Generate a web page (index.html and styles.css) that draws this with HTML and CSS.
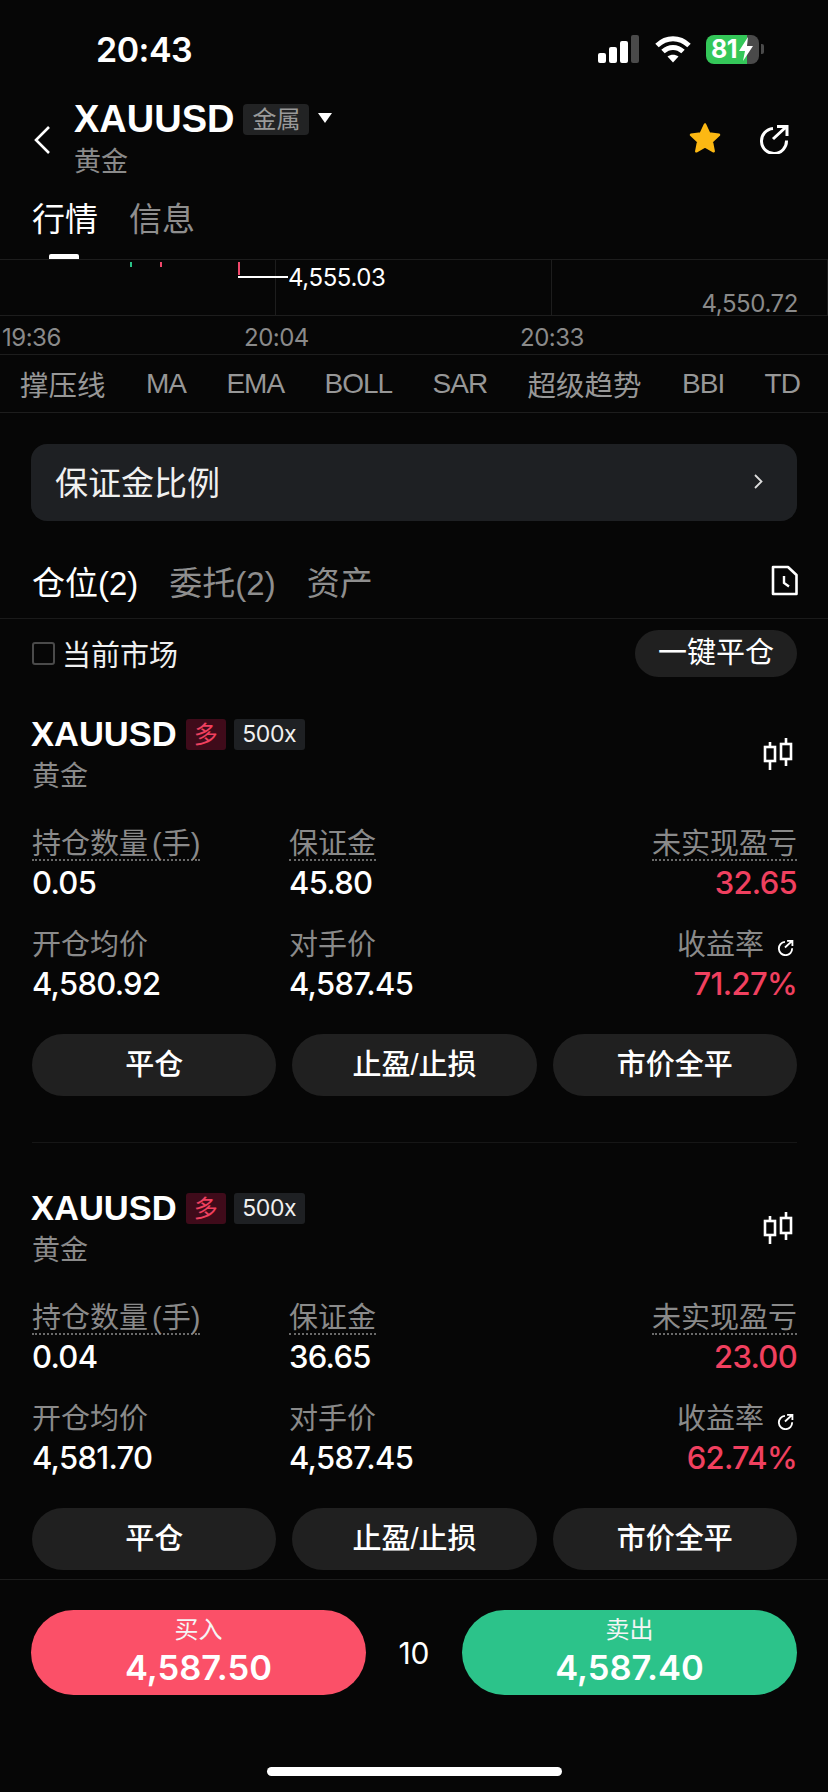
FILE: index.html
```html
<!DOCTYPE html>
<html lang="zh-CN">
<head>
  <meta charset="UTF-8">
  <title>XAUUSD</title>
  <link rel="stylesheet" href="styles.css">
</head>
<body>
  <div class="phone">
    <div class="status">
      <span class="clock">20:43</span>
      <div class="status-icons">
        <svg class="signal" width="41" height="28" viewBox="0 0 41 28">
          <rect x="0" y="18" width="8" height="10" rx="2" fill="#fff"/>
          <rect x="11" y="12" width="8" height="16" rx="2" fill="#fff"/>
          <rect x="22" y="6" width="8" height="22" rx="2" fill="#fff"/>
          <rect x="33" y="0" width="8" height="28" rx="2" fill="#4a4a4a"/>
        </svg>
        <svg class="wifi" width="38" height="28" viewBox="0 0 38 28">
          <path d="M3 10.500C12.500 1.500 25.500 1.500 35 10.500M9 16.500C15 11 23 11 29 16.500" fill="none" stroke="#fff" stroke-width="5"/>
          <path d="M13.500 21.500C17 19 21 19 24.500 21.500L19 27.500Z" fill="#fff"/>
        </svg>
        <div class="battery">
          <div class="battery-body">
            <span class="battery-num">81</span>
            <svg class="bolt" width="16" height="24" viewBox="0 0 16 24"><path d="M10 0L1 14H7L5 24L15 9H9Z" fill="#fff"/></svg>
          </div>
          <div class="battery-cap"></div>
        </div>
      </div>
    </div>

    <div class="head">
      <svg class="back" width="18" height="30" viewBox="0 0 18 30"><path d="M16 2L3 15L16 28" fill="none" stroke="#fff" stroke-width="2.600"/></svg>
      <div class="head-title">
        <div class="title-row">
          <span class="symbol">XAUUSD</span>
          <span class="market-tag">金属</span>
          <svg class="caret" width="14" height="10" viewBox="0 0 14 10"><path d="M0 0H14L7 10Z" fill="#fff"/></svg>
        </div>
        <div class="subname">黄金</div>
      </div>
      <div class="head-actions">
        <svg width="34" height="33" viewBox="0 0 34 33"><path d="M17 2.500L21.200 11.500L31 12.800L23.800 19.500L25.700 29.300L17 24.500L8.300 29.300L10.200 19.500L3 12.800L12.800 11.500Z" fill="#fcb813" stroke="#fcb813" stroke-width="2.500" stroke-linejoin="round"/></svg>
        <svg class="share" width="32" height="30" viewBox="0 0 32 30"><path d="M15 4.500A12.500 12.500 0 1 0 28.500 16.500" fill="none" stroke="#fff" stroke-width="3"/><path d="M15 15L28 3M19 2.500H29V12" fill="none" stroke="#fff" stroke-width="3"/></svg>
      </div>
    </div>

    <div class="tabs">
      <span class="tab on">行情<i class="tab-mark"></i></span>
      <span class="tab">信息</span>
    </div>

    <div class="chart">
      <div class="plot">
        <div class="grid-cell"></div>
        <div class="grid-cell"></div>
        <div class="grid-cell"></div>
        <i class="candle green candle-a"></i>
        <i class="candle red candle-b"></i>
        <i class="candle red candle-c"></i>
        <div class="low-mark"><i></i><span>4,555.03</span></div>
        <span class="axis-price">4,550.72</span>
      </div>
      <div class="times">
        <span class="time time-a">19:36</span>
        <span class="time time-b">20:04</span>
        <span class="time time-c">20:33</span>
      </div>
    </div>

    <div class="indicators">
      <span>撑压线</span><span class="en">MA</span><span class="en">EMA</span><span class="en">BOLL</span><span class="en">SAR</span><span>超级趋势</span><span class="en">BBI</span><span class="en">TD</span>
    </div>

    <div class="ratio">
      <span>保证金比例</span>
      <svg width="9" height="15" viewBox="0 0 9 15"><path d="M1 1L7.500 7.500L1 14" fill="none" stroke="#ddd" stroke-width="1.800"/></svg>
    </div>

    <div class="pos-tabs">
      <span class="pos-tab on">仓位(2)</span>
      <span class="pos-tab">委托(2)</span>
      <span class="pos-tab">资产</span>
      <svg class="doc" width="27" height="31" viewBox="0 0 27 31"><path d="M2 2H17L25.500 10V29H2Z" fill="none" stroke="#fff" stroke-width="2.600" stroke-linejoin="round"/><path d="M13 11V18L18 21.500" fill="none" stroke="#fff" stroke-width="2.400"/></svg>
    </div>

    <div class="filter">
      <i class="check"></i>
      <span class="filter-label">当前市场</span>
      <span class="close-all">一键平仓</span>
    </div>

    <div class="position">
      <div class="pos-head">
        <div>
          <div class="pos-title">
            <span class="pos-symbol">XAUUSD</span>
            <span class="side">多</span>
            <span class="lever">500x</span>
          </div>
          <div class="pos-name">黄金</div>
        </div>
        <svg class="candles" width="30" height="32" viewBox="0 0 30 32"><path d="M7 4V9M7 23V32M23 0V6M23 21V28" stroke="#fff" stroke-width="2.600"/><rect x="2" y="9" width="10" height="14" fill="none" stroke="#fff" stroke-width="2.600"/><rect x="18" y="6" width="10" height="15" fill="none" stroke="#fff" stroke-width="2.600"/></svg>
      </div>
      <div class="metrics">
        <div class="metric"><span class="label dotted">持仓数量 (手)</span><span class="value">0.05</span></div>
        <div class="metric"><span class="label dotted">保证金</span><span class="value">45.80</span></div>
        <div class="metric right"><span class="label dotted">未实现盈亏</span><span class="value up">32.65</span></div>
        <div class="metric"><span class="label">开仓均价</span><span class="value">4,580.92</span></div>
        <div class="metric"><span class="label">对手价</span><span class="value">4,587.45</span></div>
        <div class="metric right">
          <span class="label">收益率
            <svg class="mini-share" width="17" height="17" viewBox="0 0 32 30"><path d="M15 4.500A12.500 12.500 0 1 0 28.500 16.500" fill="none" stroke="#fff" stroke-width="3.500"/><path d="M15 15L28 3M19 2.500H29V12" fill="none" stroke="#fff" stroke-width="3.500"/></svg>
          </span>
          <span class="value up">71.27%</span>
        </div>
      </div>
      <div class="actions">
        <span class="action">平仓</span>
        <span class="action">止盈/止损</span>
        <span class="action">市价全平</span>
      </div>
    </div>

    <div class="position last">
      <div class="pos-head">
        <div>
          <div class="pos-title">
            <span class="pos-symbol">XAUUSD</span>
            <span class="side">多</span>
            <span class="lever">500x</span>
          </div>
          <div class="pos-name">黄金</div>
        </div>
        <svg class="candles" width="30" height="32" viewBox="0 0 30 32"><path d="M7 4V9M7 23V32M23 0V6M23 21V28" stroke="#fff" stroke-width="2.600"/><rect x="2" y="9" width="10" height="14" fill="none" stroke="#fff" stroke-width="2.600"/><rect x="18" y="6" width="10" height="15" fill="none" stroke="#fff" stroke-width="2.600"/></svg>
      </div>
      <div class="metrics">
        <div class="metric"><span class="label dotted">持仓数量 (手)</span><span class="value">0.04</span></div>
        <div class="metric"><span class="label dotted">保证金</span><span class="value">36.65</span></div>
        <div class="metric right"><span class="label dotted">未实现盈亏</span><span class="value up">23.00</span></div>
        <div class="metric"><span class="label">开仓均价</span><span class="value">4,581.70</span></div>
        <div class="metric"><span class="label">对手价</span><span class="value">4,587.45</span></div>
        <div class="metric right">
          <span class="label">收益率
            <svg class="mini-share" width="17" height="17" viewBox="0 0 32 30"><path d="M15 4.500A12.500 12.500 0 1 0 28.500 16.500" fill="none" stroke="#fff" stroke-width="3.500"/><path d="M15 15L28 3M19 2.500H29V12" fill="none" stroke="#fff" stroke-width="3.500"/></svg>
          </span>
          <span class="value up">62.74%</span>
        </div>
      </div>
      <div class="actions">
        <span class="action">平仓</span>
        <span class="action">止盈/止损</span>
        <span class="action">市价全平</span>
      </div>
    </div>

    <div class="trade">
      <div class="trade-btn buy"><span class="trade-label">买入</span><span class="trade-price">4,587.50</span></div>
      <span class="lots">10</span>
      <div class="trade-btn sell"><span class="trade-label">卖出</span><span class="trade-price">4,587.40</span></div>
    </div>
    <div class="home-bar"></div>
  </div>
</body>
</html>
```

FILE: styles.css
```css
* {
  box-sizing: border-box;
}

body {
  margin: 0;
  background: #060606;
  color: #fff;
  font-family: "Liberation Sans", "Noto Sans CJK SC", sans-serif;
}

.phone {
  width: 828px;
  height: 1792px;
  overflow: hidden;
}

/* status bar */
.status {
  height: 98px;
  display: flex;
  align-items: center;
  justify-content: space-between;
  padding: 0 64px 0 96px;
}

.clock {
  font-family: "Inter", sans-serif;
  font-size: 34px;
  font-weight: 600;
  letter-spacing: -0.5px;
}

.status-icons {
  display: flex;
  align-items: center;
}

.signal {
  margin-right: 15px;
}

.wifi {
  margin-right: 14px;
}

.battery {
  display: flex;
  align-items: center;
  gap: 2px;
}

.battery-body {
  width: 53px;
  height: 29px;
  border-radius: 8px;
  background: linear-gradient(90deg, #34c759 0 78%, #4a4a4a 78%);
  display: flex;
  align-items: center;
  padding-left: 5px;
}

.battery-num {
  font-family: "Inter", sans-serif;
  font-size: 25px;
  font-weight: 700;
  letter-spacing: -0.5px;
}

.bolt {
  margin-left: 1px;
}

.battery-cap {
  width: 3px;
  height: 10px;
  border-radius: 0 2px 2px 0;
  background: #4a4a4a;
}

/* header */
.head {
  height: 84px;
  display: flex;
  align-items: center;
  padding: 0 38px 0 33px;
}

.back {
  margin-right: 23px;
}

.head-title {
  flex: 1;
}

.title-row {
  height: 42px;
  display: flex;
  align-items: center;
}

.symbol {
  font-size: 38px;
  font-weight: 700;
}

.market-tag {
  margin-left: 9px;
  width: 66px;
  height: 31px;
  border-radius: 4px;
  background: #222324;
  color: #9a9a9a;
  font-size: 24px;
  line-height: 31px;
  text-align: center;
}

.caret {
  margin-left: 9px;
  margin-top: -3px;
}

.subname {
  height: 42px;
  line-height: 44px;
  color: #8a8a8a;
  font-size: 27px;
}

.head-actions {
  display: flex;
  align-items: center;
  gap: 36px;
  margin-top: -3px;
}

/* page tabs */
.tabs {
  height: 77px;
  padding: 18px 32px 0;
  display: flex;
  gap: 31px;
}

.tab {
  position: relative;
  height: 40px;
  line-height: 40px;
  font-size: 33px;
  color: #8e8e8e;
}

.tab.on {
  color: #fff;
}

.tab-mark {
  position: absolute;
  left: 17px;
  top: 54px;
  width: 30px;
  height: 5px;
  border-radius: 2px 2px 0 0;
  background: #fff;
}

/* chart strip */
.chart {
  height: 95px;
  border-top: 1px solid #1d1d1d;
}

.plot {
  position: relative;
  height: 56px;
  display: flex;
  border-bottom: 1px solid #1d1d1d;
}

.grid-cell {
  width: 276px;
  border-right: 1px solid #1d1d1d;
}

.grid-cell:last-of-type {
  border-right: none;
}

.candle {
  position: absolute;
  top: 2px;
  width: 2px;
}

.green {
  background: #2bc287;
}

.red {
  background: #f0476a;
}

.candle-a {
  left: 130px;
  height: 5px;
}

.candle-b {
  left: 160px;
  height: 5px;
}

.candle-c {
  left: 238px;
  height: 13px;
}

.low-mark {
  position: absolute;
  left: 238px;
  top: 2px;
  height: 30px;
  display: flex;
  align-items: center;
  font-family: "Inter", sans-serif;
  font-size: 24px;
  letter-spacing: -0.4px;
}

.low-mark i {
  width: 50px;
  height: 2px;
  background: #fff;
}

.axis-price {
  position: absolute;
  right: 30px;
  bottom: -3px;
  font-family: "Inter", sans-serif;
  font-size: 24px;
  letter-spacing: -0.4px;
  color: #8a8a8a;
}

.times {
  position: relative;
  height: 38px;
}

.time {
  position: absolute;
  top: 7px;
  font-family: "Inter", sans-serif;
  font-size: 24px;
  letter-spacing: -0.5px;
  color: #8a8a8a;
}

.time-a {
  left: 2px;
}

.time-b {
  left: 244px;
}

.time-c {
  left: 520px;
}

.indicators {
  height: 59px;
  padding: 0 28px 0 20px;
  display: flex;
  align-items: center;
  justify-content: space-between;
  border-top: 1px solid #1d1d1d;
  border-bottom: 1px solid #1d1d1d;
  color: #979797;
  font-size: 28.500px;
}

.indicators .en {
  font-size: 28px;
  letter-spacing: -1px;
}

/* margin ratio */
.ratio {
  height: 77px;
  margin: 31px 31px 0;
  padding: 0 34px 3px 24px;
  display: flex;
  align-items: center;
  justify-content: space-between;
  border-radius: 16px;
  background: #1e2023;
  color: #f0f0f0;
  font-size: 33px;
}

/* positions tabs */
.pos-tabs {
  height: 98px;
  padding: 22px 30px 0 32px;
  display: flex;
  align-items: center;
  gap: 31px;
  border-bottom: 1px solid #1a1a1a;
}

.pos-tab {
  font-size: 33px;
  color: #8e8e8e;
}

.pos-tab.on {
  color: #fff;
}

.doc {
  margin-left: auto;
}

.filter {
  height: 68px;
  padding: 0 31px 0 32px;
  display: flex;
  align-items: center;
}

.check {
  width: 23px;
  height: 23px;
  border: 2px solid #4a4a4a;
  border-radius: 3px;
}

.filter-label {
  margin-left: 7px;
  font-size: 29px;
  color: #f0f0f0;
}

.close-all {
  margin-left: auto;
  width: 162px;
  height: 47px;
  line-height: 47px;
  border-radius: 24px;
  background: #202020;
  text-align: center;
  font-size: 29px;
}

/* position card */
.position {
  margin: 0 31px 0 32px;
  padding: 29px 0 46px;
  border-bottom: 1px solid #161616;
}

.position.last {
  padding: 47px 0 9px;
  border-bottom: none;
}

.pos-head {
  display: flex;
  align-items: center;
  justify-content: space-between;
}

.pos-title {
  height: 36px;
  display: flex;
  align-items: center;
}

.pos-symbol {
  font-size: 34.500px;
  font-weight: 700;
  margin-left: -1px;
}

.side {
  margin-left: 9px;
  width: 40px;
  height: 31px;
  line-height: 31px;
  border-radius: 3px;
  background: #3f0b1a;
  color: #f0405f;
  font-size: 24px;
  text-align: center;
}

.lever {
  margin-left: 8px;
  width: 71px;
  height: 31px;
  line-height: 31px;
  border-radius: 3px;
  background: #1e2023;
  color: #f0f0f0;
  font-family: "Inter", sans-serif;
  font-size: 23px;
  letter-spacing: -0.4px;
  text-align: center;
}

.pos-name {
  margin-top: 4px;
  height: 42px;
  line-height: 42px;
  color: #8a8a8a;
  font-size: 28px;
}

.candles {
  margin-right: 4px;
  margin-top: -6px;
}

.metrics {
  margin-top: 29px;
  display: grid;
  grid-template-columns: 257px 1fr 1fr;
  row-gap: 26px;
}

.metric {
  display: flex;
  flex-direction: column;
  align-items: flex-start;
}

.metric.right {
  align-items: flex-end;
}

.label {
  height: 34px;
  line-height: 34px;
  color: #8a8a8a;
  font-size: 29px;
  word-spacing: -4px;
  white-space: nowrap;
}

.label.dotted {
  border-bottom: 2px dotted #6a6a6a;
}

.mini-share {
  margin: 0 3px 0 9px;
  vertical-align: -1px;
}

.value {
  margin-top: 3px;
  height: 38px;
  line-height: 38px;
  font-family: "Inter", sans-serif;
  font-size: 31px;
  font-weight: 500;
  letter-spacing: -0.7px;
}

.up {
  color: #f0405f;
}

.actions {
  margin-top: 31px;
  display: grid;
  grid-template-columns: 1fr 1fr 1fr;
  gap: 16px;
}

.action {
  height: 62px;
  line-height: 62px;
  border-radius: 31px;
  background: #202020;
  text-align: center;
  font-size: 29px;
  font-weight: 500;
}

/* buy / sell */
.trade {
  border-top: 1px solid #1d1d1d;
  padding: 30px 31px 0;
  display: flex;
  align-items: center;
  justify-content: space-between;
}

.trade-btn {
  width: 335px;
  height: 85px;
  border-radius: 43px;
  display: flex;
  flex-direction: column;
  align-items: center;
  padding-top: 4px;
}

.buy {
  background: #fb5068;
}

.sell {
  background: #2cc38a;
}

.trade-label {
  height: 32px;
  line-height: 32px;
  font-size: 24px;
  color: #f5f5f5;
}

.trade-price {
  height: 44px;
  line-height: 44px;
  font-family: "Inter", sans-serif;
  font-size: 34.500px;
  font-weight: 600;
}

.lots {
  font-family: "Inter", sans-serif;
  font-size: 30px;
}

.home-bar {
  width: 295px;
  height: 9px;
  margin: 72px auto 0;
  border-radius: 5px;
  background: #fff;
}
```
